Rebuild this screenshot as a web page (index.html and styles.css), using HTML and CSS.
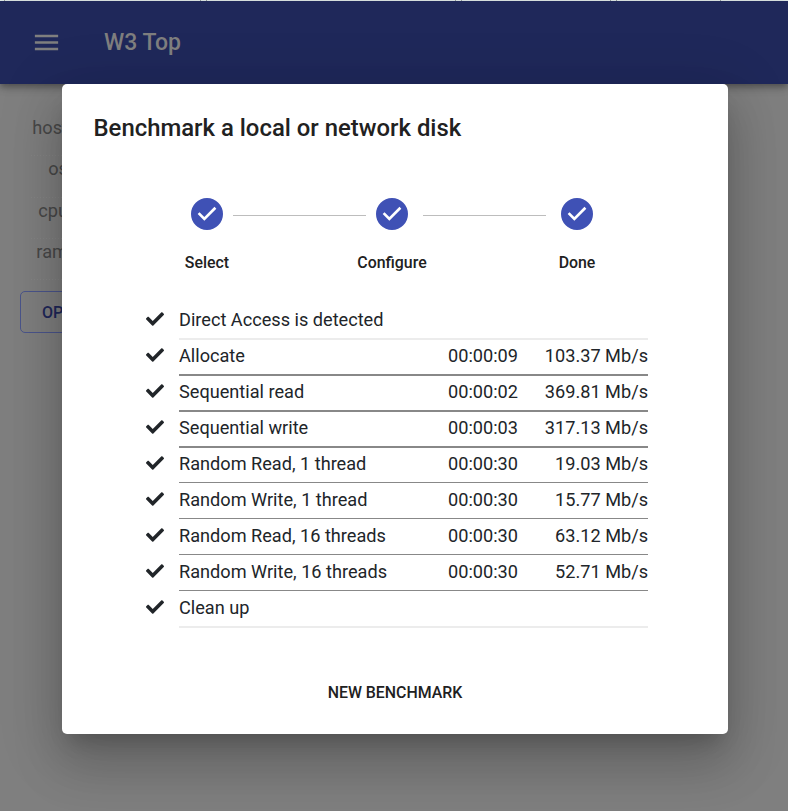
FILE: index.html
```html
<!DOCTYPE html>
<html lang="en">
<head>
<meta charset="utf-8">
<title>W3 Top</title>
<link rel="stylesheet" href="styles.css">
</head>
<body>
<svg class="sprite" width="0" height="0" aria-hidden="true">
  <symbol id="done" viewBox="0 0 24 24"><path d="M12 0a12 12 0 1 0 0 24 12 12 0 0 0 0-24zm-2 17l-5-5 1.4-1.4 3.6 3.6 7.6-7.6L19 8l-9 9z"/></symbol>
  <symbol id="check" viewBox="0 0 512 512"><path d="M173.898 439.404l-166.4-166.4c-9.997-9.997-9.997-26.206 0-36.204l36.203-36.204c9.997-9.998 26.207-9.998 36.204 0L192 312.69 432.095 72.596c9.997-9.997 26.207-9.997 36.204 0l36.203 36.204c9.997 9.997 9.997 26.206 0 36.204l-294.4 294.401c-9.998 9.997-26.207 9.997-36.204-.001z"/></symbol>
</svg>
<div class="page">
  <div class="strip"><i></i><i></i><i></i><i></i><i></i><i></i><i></i><i></i></div>
  <header class="bar">
    <svg class="menu" viewBox="0 0 24 24"><path d="M3 18h18v-2H3v2zm0-5h18v-2H3v2zm0-7v2h18V6H3z"/></svg>
    <span class="brand">W3 Top</span>
  </header>
  <main class="content">
    <div class="info">host</div>
    <div class="info">os</div>
    <div class="info">cpu</div>
    <div class="info">ram</div>
    <div class="open">OPEN</div>
  </main>
</div>
<section class="dialog" role="dialog">
  <h1>Benchmark a local or network disk</h1>
  <div class="stepper">
    <svg><use href="#done"/></svg><span class="line first"></span>
    <svg><use href="#done"/></svg><span class="line second"></span>
    <svg><use href="#done"/></svg>
  </div>
  <div class="labels"><span>Select</span><span>Configure</span><span>Done</span></div>
  <div class="results">
    <div class="row"><svg><use href="#check"/></svg><div class="cells pale"><span>Direct Access is detected</span></div></div>
    <div class="row"><svg><use href="#check"/></svg><div class="cells thick"><span>Allocate</span><span class="time">00:00:09</span><span class="speed">103.37 Mb/s</span></div></div>
    <div class="row"><svg><use href="#check"/></svg><div class="cells thick"><span>Sequential read</span><span class="time">00:00:02</span><span class="speed">369.81 Mb/s</span></div></div>
    <div class="row"><svg><use href="#check"/></svg><div class="cells thick"><span>Sequential write</span><span class="time">00:00:03</span><span class="speed">317.13 Mb/s</span></div></div>
    <div class="row"><svg><use href="#check"/></svg><div class="cells thin"><span>Random Read, 1 thread</span><span class="time">00:00:30</span><span class="speed">19.03 Mb/s</span></div></div>
    <div class="row"><svg><use href="#check"/></svg><div class="cells thin"><span>Random Write, 1 thread</span><span class="time">00:00:30</span><span class="speed">15.77 Mb/s</span></div></div>
    <div class="row"><svg><use href="#check"/></svg><div class="cells thin"><span>Random Read, 16 threads</span><span class="time">00:00:30</span><span class="speed">63.12 Mb/s</span></div></div>
    <div class="row"><svg><use href="#check"/></svg><div class="cells thin"><span>Random Write, 16 threads</span><span class="time">00:00:30</span><span class="speed">52.71 Mb/s</span></div></div>
    <div class="row"><svg><use href="#check"/></svg><div class="cells pale"><span>Clean up</span></div></div>
  </div>
  <div class="action">NEW BENCHMARK</div>
</section>
</body>
</html>
```
FILE: styles.css
```css
* { box-sizing: border-box; }
body {
  margin: 0;
  height: 811px;
  overflow: hidden;
  position: relative;
  background: #7f7f7f;
  font-family: Roboto, "Liberation Sans", sans-serif;
}
.sprite { position: absolute; }
.strip {
  height: 1px;
  background: #e4eeec;
  display: grid;
  grid-template-columns: 5px 196px 6px 249px 6px 149px 6px 104px;
}
.strip i { border-right: 1px solid #98a09f; }
.bar {
  height: 83px;
  background: #1f285a;
  display: flex;
  align-items: center;
  padding-left: 31px;
  position: relative;
  box-shadow: 0 3px 5px -1px rgba(0,0,0,.2), 0 5px 7px rgba(0,0,0,.14), 0 1px 13px rgba(0,0,0,.12);
}
.menu { width: 31px; height: 31px; fill: #7f7f7f; }
.brand {
  margin-left: 42px;
  color: #7f7f7f;
  font-size: 23px;
  font-weight: 500;
}
.content { padding: 31px 0 0 20px; }
.info {
  width: 48px;
  height: 41.3px;
  line-height: 25px;
  font-size: 18.2px;
  color: #484848;
  text-align: right;
  background: repeating-linear-gradient(90deg, #858585 0 1px, transparent 1px 3px) 11px bottom / 100% 1px no-repeat;
}
.open {
  margin-top: 11px;
  width: 110px;
  height: 42px;
  line-height: 41px;
  padding-left: 21px;
  border: 1px solid #4b558c;
  border-radius: 5px;
  color: #1f285a;
  font-size: 16px;
  font-weight: 500;
}
.dialog {
  position: absolute;
  left: 62px;
  top: 84px;
  width: 666px;
  height: 650px;
  background: #fff;
  border-radius: 5px;
  color: #212121;
  box-shadow: 0 14px 20px -9px rgba(0,0,0,.2), 0 31px 49px 4px rgba(0,0,0,.14), 0 12px 60px 10px rgba(0,0,0,.12);
}
h1 {
  margin: 0;
  padding: 26px 31.5px 0;
  font-size: 23.9px;
  line-height: 36px;
  font-weight: 500;
}
.stepper {
  margin: 52.4px 0 0 129px;
  display: flex;
  align-items: center;
  height: 32px;
}
.stepper svg { width: 32px; height: 32px; fill: #3f51b5; }
.line { height: 1px; background: #bdbdbd; }
.first { width: 133px; margin: 2px 10px 0; }
.second { width: 123px; margin: 2px 15px 0; }
.labels {
  width: 555px;
  margin: 21.6px 0 0 52.5px;
  display: grid;
  grid-template-columns: repeat(3, 185px);
  text-align: center;
  font-size: 15.9px;
  line-height: 22px;
  font-weight: 500;
}
.results {
  margin: 30px 80px 0 84px;
  color: #212529;
  font-size: 18.15px;
}
.row { display: flex; height: 36px; }
.row svg { width: 18px; height: 18px; margin: 6.4px 15px 0 0; fill: currentColor; }
.cells {
  flex: 1;
  display: grid;
  grid-template-columns: 1fr 80px 130px;
  height: 36px;
  line-height: 32px;
  border-bottom: 2px solid #ececec;
}
.time, .speed { text-align: right; }
.thick { border-bottom-color: #888; }
.thin { height: 35px; border-bottom: 1px solid #888; }
.action {
  margin-top: 53px;
  text-align: center;
  font-size: 15.9px;
  line-height: 24px;
  font-weight: 500;
}
```
